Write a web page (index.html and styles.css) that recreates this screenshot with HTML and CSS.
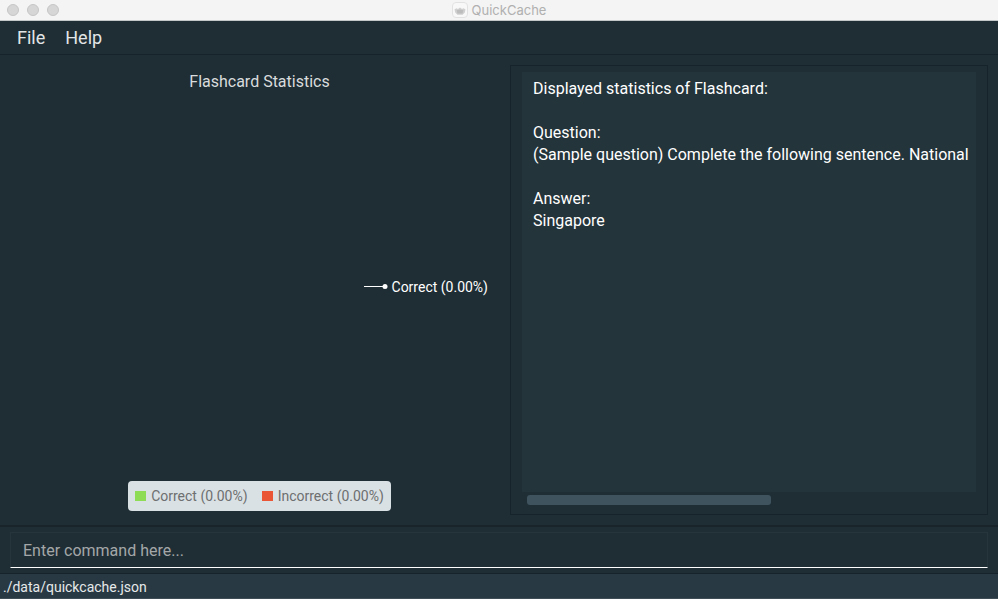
FILE: index.html
```html
<!DOCTYPE html>
<html lang="en">
<head>
<meta charset="utf-8">
<title>QuickCache</title>
<link rel="stylesheet" href="styles.css">
</head>
<body>
<div class="window">
  <header class="titlebar">
    <div class="lights"><span class="light"></span><span class="light"></span><span class="light"></span></div>
    <div class="title">
      <svg class="app-icon" viewBox="0 0 16 16" aria-hidden="true">
        <rect x="0.5" y="0.5" width="15" height="15" rx="3.5" fill="#f8f8f8" stroke="#e2e2e2"/>
        <path d="M2.5 7.4 4.4 6.2 6 7 8 5.4 10 7 11.6 6.2 13.5 7.4 12.8 10.6 10.6 12.8H5.4L3.2 10.6Z" fill="#d0d0d0"/>
        <path d="M4.6 8.2 8 7.4 11.4 8.2 10.6 11.6H5.4Z" fill="#bcbcbc"/>
      </svg>
      <span>QuickCache</span>
    </div>
  </header>
  <nav class="menubar">
    <button class="menu" type="button">File</button>
    <button class="menu" type="button">Help</button>
  </nav>
  <main class="content">
    <section class="chart">
      <h1 class="chart-title">Flashcard Statistics</h1>
      <div class="plot">
        <div class="callout">
          <svg class="leader" viewBox="0 0 24 8" aria-hidden="true"><path d="M0 3.5H21" stroke="#fff"/><circle cx="21" cy="3.5" r="2.5" fill="#fff"/></svg>
          <span>Correct (0.00%)</span>
        </div>
      </div>
      <ul class="legend">
        <li class="key"><span class="swatch correct"></span>Correct (0.00%)</li>
        <li class="key"><span class="swatch incorrect"></span>Incorrect (0.00%)</li>
      </ul>
    </section>
    <section class="result">
      <textarea class="output" readonly wrap="off" aria-label="Result">Displayed statistics of Flashcard:

Question:
(Sample question) Complete the following sentence. National

Answer:
Singapore</textarea>
      <div class="track"><div class="thumb"></div></div>
    </section>
  </main>
  <form class="command">
    <input class="field" type="text" placeholder="Enter command here..." aria-label="Command">
  </form>
  <footer class="status">./data/quickcache.json</footer>
</div>
</body>
</html>
```
FILE: styles.css
```css
* { box-sizing: border-box; }

body {
  margin: 0;
  background: #1f2e35;
  font-family: Roboto, "Liberation Sans", sans-serif;
  color: #fff;
}

.window {
  display: flex;
  flex-direction: column;
  min-height: 100vh;
}

.titlebar {
  display: grid;
  grid-template-columns: 1fr auto 1fr;
  align-items: center;
  height: 21px;
  background: #f4f4f4;
  border-bottom: 1px solid #c4c8c9;
}

.lights { display: flex; gap: 8px; padding-left: 7px; }

.light {
  width: 12px;
  height: 12px;
  border: 1px solid #c6c6c6;
  border-radius: 50%;
  background: #d6d6d6;
}

.title {
  display: flex;
  align-items: center;
  gap: 4px;
  font-family: Inter, "Liberation Sans", sans-serif;
  font-size: 13px;
  line-height: 20px;
  color: #b0b0b0;
}

.app-icon { width: 16px; height: 16px; }

.menubar {
  display: flex;
  gap: 20px;
  height: 34px;
  padding: 0 17px;
  border-bottom: 1px solid #17232a;
}

.menu {
  padding: 0;
  border: 0;
  background: none;
  color: #e2e5e6;
  font: inherit;
  font-size: 18px;
}

.content {
  flex: 1;
  display: grid;
  grid-template-columns: minmax(0, 1fr) minmax(0, 1fr);
  border-bottom: 2px solid #18242a;
}

.chart {
  display: flex;
  flex-direction: column;
  align-items: center;
  padding: 17px 0 14px 20px;
}

.chart-title {
  margin: 0;
  font-size: 16px;
  font-weight: 400;
  line-height: 20px;
  color: #d9dcdd;
}

.plot {
  flex: 1;
  display: flex;
  align-items: center;
  align-self: stretch;
  justify-content: flex-end;
  padding: 0 11px 0 0;
}

.callout {
  display: flex;
  align-items: center;
  gap: 4px;
  font-size: 14px;
  line-height: 20px;
}

.leader { width: 24px; height: 8px; }

.legend {
  display: flex;
  gap: 14px;
  margin: 0;
  padding: 5px 7px;
  border-radius: 4px;
  background: #dae1e4;
  list-style: none;
  font-size: 14px;
  line-height: 20px;
  color: #6d6f70;
}

.key { display: flex; align-items: center; gap: 5px; }
.swatch { width: 11px; height: 10px; }
.correct { background: #8edb56; }
.incorrect { background: #ea5635; }

.result {
  display: flex;
  flex-direction: column;
  margin: 10px 10px 10px 11px;
  padding: 6px 11px 9px;
  border: 1px solid #17232a;
}

.output {
  flex: 1;
  width: 100%;
  padding: 6px 0 6px 11px;
  border: 0;
  outline: 0;
  resize: none;
  overflow: hidden;
  background: #24343b;
  color: #fff;
  font: inherit;
  font-size: 16px;
  line-height: 22px;
}

.track { padding: 3px 5px 0; }
.thumb { width: 55%; height: 10px; border-radius: 3px; background: #3e535e; }

.command { padding: 5px 10px; border-bottom: 1px solid #17232a; }

.field {
  display: block;
  width: 100%;
  height: 36px;
  padding: 0 12px;
  border: 1px solid #26353c;
  border-bottom-color: #fff;
  border-radius: 0;
  outline: 0;
  background: #1f2e35;
  color: #fff;
  font: inherit;
  font-size: 16px;
}

.field::placeholder { color: #a4a7a8; opacity: 1; }

.status {
  height: 25px;
  padding: 1px 3px 0;
  border-bottom: 1px solid #3e4d56;
  background: #293943;
  font-size: 14px;
  line-height: 24px;
  color: #e6e9ea;
}
```
